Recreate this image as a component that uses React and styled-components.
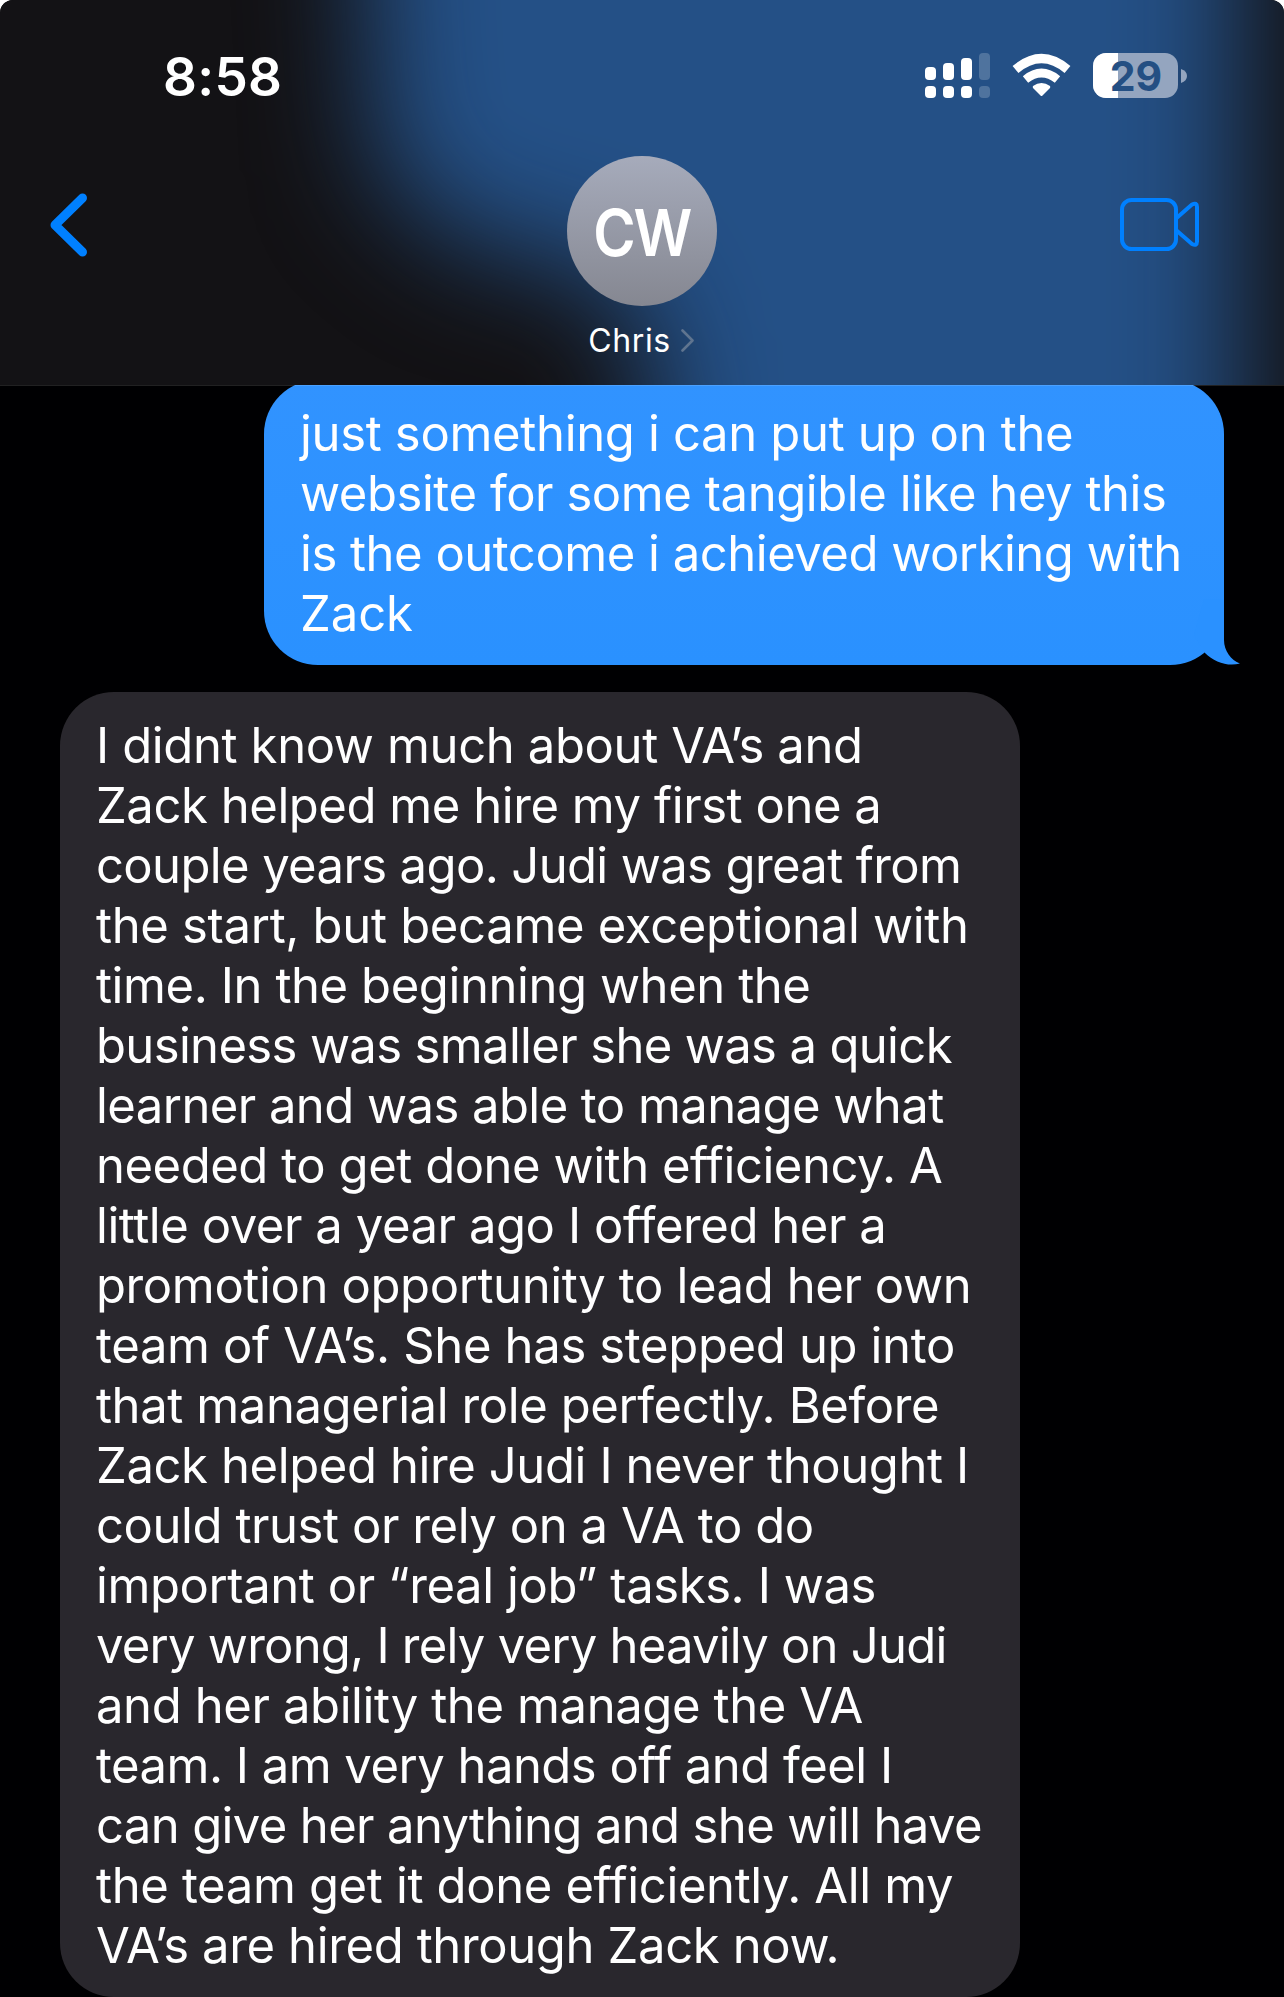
import React from "react";
import styled, { createGlobalStyle } from "styled-components";

const GlobalStyle = createGlobalStyle`
  * {
    box-sizing: border-box;
  }
  body {
    margin: 0;
    background: #ffffff;
    font-family: Inter, "Liberation Sans", sans-serif;
  }
`;

const Screen = styled.div`
  width: 1284px;
  height: 1997px;
  overflow: hidden;
  border-radius: 13px 13px 0 0;
  background: #000002;
  color: #ffffff;
`;

const Header = styled.header`
  position: relative;
  z-index: 1;
  height: 385px;
  overflow: hidden;
  background: #131215;
  box-shadow: 0 1px 0 rgba(255, 255, 255, 0.13);
`;

// blue bubbles showing through the frosted header
const Frost = styled.div`
  position: absolute;
  inset: -200px 0;
  filter: blur(58px);

  &::before {
    content: "";
    display: block;
    height: 100%;
    background: #245086;
    clip-path: polygon(
      358px 0,
      1238px 0,
      1238px 100%,
      664px 100%,
      650px 540px,
      600px 470px,
      470px 448px,
      378px 370px
    );
  }
`;

const HeaderContent = styled.div`
  position: relative;
`;

const StatusBar = styled.div`
  display: flex;
  justify-content: space-between;
  align-items: center;
  height: 150px;
  padding: 1px 97px 0 163px;
`;

const Time = styled.span`
  padding-top: 3px;
  font-size: 53px;
  font-weight: 600;
  letter-spacing: 0.3px;
`;

const NavBar = styled.div`
  display: flex;
  justify-content: space-between;
  padding: 6px 84px 0 48px;
`;

const NavSide = styled.div`
  width: 84px;
  display: flex;
  justify-content: ${(props) => (props.$end ? "flex-end" : "flex-start")};
  padding-top: ${(props) => props.$top}px;
`;

const Contact = styled.div`
  display: flex;
  flex-direction: column;
  align-items: center;
  margin-left: 36px;
`;

const Avatar = styled.div`
  width: 150px;
  height: 150px;
  display: flex;
  align-items: center;
  justify-content: center;
  border-radius: 50%;
  background: linear-gradient(#a6abbb, #858791);
`;

const Initials = styled.span`
  padding-top: 2px;
  font-size: 64px;
  font-weight: 600;
  letter-spacing: -2.5px;
  transform: scaleX(0.9);
`;

const Name = styled.div`
  display: flex;
  align-items: center;
  gap: 10px;
  height: 40px;
  margin: 14px 2px 0 0;
  font-size: 32px;
  letter-spacing: 0.6px;
`;

const Thread = styled.main`
  display: flex;
  flex-direction: column;
  gap: 27px;
  margin-top: -5px;
  padding: 0 60px;
`;

const Bubble = styled.div`
  position: relative;
  width: 960px;
  padding: 24px 36px 21px;
  border-radius: 54px;
  background: ${(props) =>
    props.$sent ? "linear-gradient(#3193ff, #2a91ff)" : "#29272d"};
  align-self: ${(props) => (props.$sent ? "flex-end" : "flex-start")};
`;

const Line = styled.div`
  font-size: 49px;
  line-height: 60px;
  white-space: nowrap;
  letter-spacing: ${(props) => props.$track}px;
`;

const Tail = styled.svg`
  position: absolute;
  right: -16px;
  bottom: 0;
`;

// text and letter spacing of each line
const sent = [
  ["just something i can put up on the", -0.33],
  ["website for some tangible like hey this", -0.44],
  ["is the outcome i achieved working with", -0.49],
  ["Zack", -0.1],
];

const received = [
  ["I didnt know much about VA’s and", -0.37],
  ["Zack helped me hire my first one a", -0.45],
  ["couple years ago. Judi was great from", -0.63],
  ["the start, but became exceptional with", -0.32],
  ["time. In the beginning when the", -0.42],
  ["business was smaller she was a quick", -0.65],
  ["learner and was able to manage what", -0.56],
  ["needed to get done with efficiency. A", -0.46],
  ["little over a year ago I offered her a", -0.44],
  ["promotion opportunity to lead her own", -0.39],
  ["team of VA’s. She has stepped up into", -0.35],
  ["that managerial role perfectly. Before", -0.41],
  ["Zack helped hire Judi I never thought I", -0.4],
  ["could trust or rely on a VA to do", -0.43],
  ["important or “real job” tasks. I was", -0.42],
  ["very wrong, I rely very heavily on Judi", -0.77],
  ["and her ability the manage the VA", -0.39],
  ["team. I am very hands off and feel I", -0.52],
  ["can give her anything and she will have", -0.64],
  ["the team get it done efficiently. All my", -0.36],
  ["VA’s are hired through Zack now.", -0.37],
];

const StatusIcons = () => (
  <svg width="262" height="65" viewBox="925 43 262 65" fill="#fff">
    <rect x="925" y="67" width="11" height="13" rx="4" />
    <rect x="943" y="63" width="11" height="17" rx="4" />
    <rect x="961" y="58" width="11" height="22" rx="4" />
    <rect x="979" y="53" width="11" height="27" rx="4" opacity="0.2" />
    <rect x="925" y="86" width="11" height="12" rx="4" />
    <rect x="943" y="86" width="11" height="12" rx="4" />
    <rect x="961" y="86" width="11" height="12" rx="4" />
    <rect x="979" y="86" width="11" height="12" rx="4" opacity="0.2" />
    <g fill="none" stroke="#fff">
      <path d="M1015.5 69.5Q1041.5 47.5 1067.5 69.5" strokeWidth="9" />
      <path d="M1025.5 79.5Q1041.5 66.5 1057.5 79.5" strokeWidth="8.5" />
    </g>
    <path d="M1033 86Q1041.5 80 1050 86Q1050.5 87 1050 88L1042.5 95.5Q1041.5 96.5 1040.5 95.5L1033 88Q1032.5 87 1033 86Z" />
    <clipPath id="battery">
      <rect x="1093" y="53" width="85" height="45" rx="13" />
    </clipPath>
    <g clipPath="url(#battery)">
      <rect x="1093" y="53" width="85" height="45" fill="#94a5bf" />
      <rect x="1093" y="53" width="25" height="45" />
    </g>
    <path d="M1181 69Q1187 71 1187 76Q1187 81 1181 83Z" fill="#94a5bf" />
    <text
      x="1136"
      y="90.5"
      textAnchor="middle"
      fill="#244f83"
      fontSize="41"
      fontWeight="700"
    >
      29
    </text>
  </svg>
);

const BackIcon = () => (
  <svg width="42" height="66" viewBox="0 0 42 66" fill="none">
    <path
      d="M34.5 6L7 33L34.5 60"
      stroke="#0080ff"
      strokeWidth="9"
      strokeLinecap="round"
      strokeLinejoin="round"
    />
  </svg>
);

const VideoIcon = () => (
  <svg width="80" height="54" viewBox="0 0 80 54" fill="none">
    <g stroke="#0080ff" strokeWidth="4" strokeLinejoin="round">
      <rect x="2" y="2" width="54" height="49" rx="9.5" />
      <path d="M56 20.500L72 6.500Q77 4 77 9V43.500Q77 48.500 72 46L56 32" />
    </g>
  </svg>
);

const ChevronIcon = () => (
  <svg width="13" height="23" viewBox="0 0 13 23" fill="none">
    <path
      d="M1.5 1.5L11.5 11.5L1.5 21.5"
      stroke="#5f748f"
      strokeWidth="2.6"
      strokeLinecap="round"
      strokeLinejoin="round"
    />
  </svg>
);

const App = () => {
  return (
    <>
      <GlobalStyle />
      <Screen>
        <Header>
          <Frost />
          <HeaderContent>
            <StatusBar>
              <Time>8:58</Time>
              <StatusIcons />
            </StatusBar>
            <NavBar>
              <NavSide $top={36}>
                <BackIcon />
              </NavSide>
              <Contact>
                <Avatar>
                  <Initials>CW</Initials>
                </Avatar>
                <Name>
                  Chris
                  <ChevronIcon />
                </Name>
              </Contact>
              <NavSide $end $top={42}>
                <VideoIcon />
              </NavSide>
            </NavBar>
          </HeaderContent>
        </Header>

        <Thread>
          <Bubble $sent>
            {sent.map(([text, track]) => (
              <Line key={text} $track={track}>
                {text}
              </Line>
            ))}
            <Tail width="70" height="66" viewBox="0 0 70 66">
              <path
                d="M34 0H54V41C54 52 61 61 70 64.500C58 68 44 63 35 54L24 36Z"
                fill="#2a91ff"
              />
            </Tail>
          </Bubble>
          <Bubble>
            {received.map(([text, track]) => (
              <Line key={text} $track={track}>
                {text}
              </Line>
            ))}
          </Bubble>
        </Thread>
      </Screen>
    </>
  );
};

export default App;
